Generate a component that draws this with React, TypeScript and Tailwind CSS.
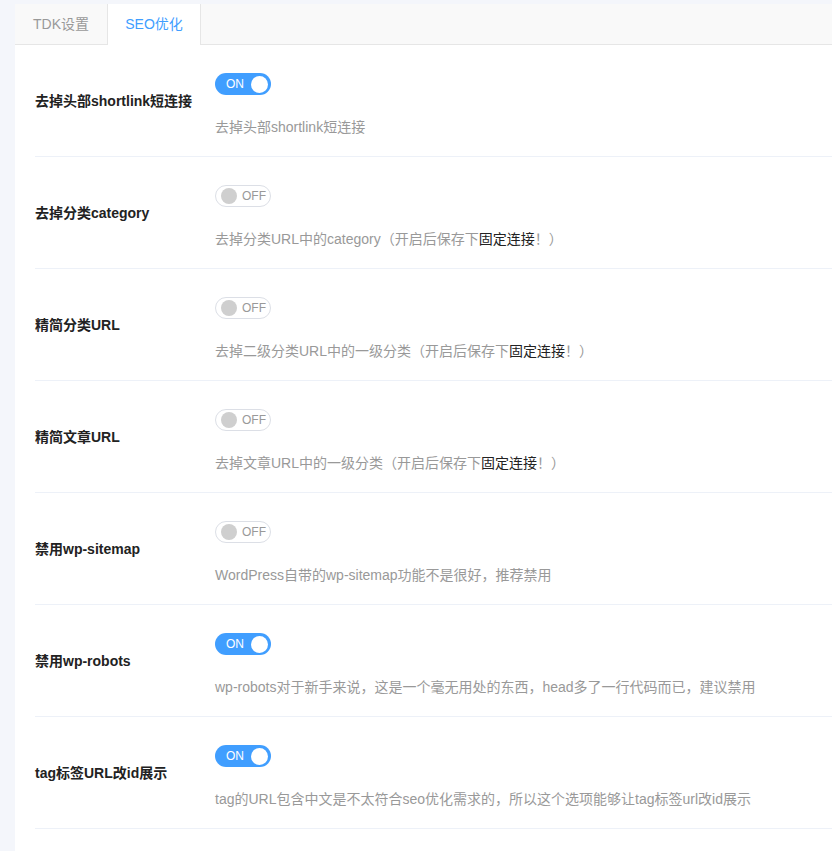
import React from "react";

type Item = { label: string; on: boolean; desc: React.ReactNode };

const link = <span className="text-[#222]">固定连接</span>;

const items: Item[] = [
  { label: "去掉头部shortlink短连接", on: true, desc: <>去掉头部shortlink短连接</> },
  { label: "去掉分类category", on: false, desc: <>去掉分类URL中的category（开启后保存下{link}！）</> },
  { label: "精简分类URL", on: false, desc: <>去掉二级分类URL中的一级分类（开启后保存下{link}！）</> },
  { label: "精简文章URL", on: false, desc: <>去掉文章URL中的一级分类（开启后保存下{link}！）</> },
  { label: "禁用wp-sitemap", on: false, desc: <>WordPress自带的wp-sitemap功能不是很好，推荐禁用</> },
  { label: "禁用wp-robots", on: true, desc: <>wp-robots对于新手来说，这是一个毫无用处的东西，head多了一行代码而已，建议禁用</> },
  { label: "tag标签URL改id展示", on: true, desc: <>tag的URL包含中文是不太符合seo优化需求的，所以这个选项能够让tag标签url改id展示</> },
];

function Toggle({ on }: { on: boolean }) {
  if (on) {
    return (
      <div className="flex h-[22px] w-[56px] items-center justify-between rounded-full bg-[#409eff] pl-[11px] pr-[3px]">
        <span className="text-[12px] leading-none text-white">ON</span>
        <span className="h-[17px] w-[17px] rounded-full bg-white" />
      </div>
    );
  }
  return (
    <div className="flex h-[22px] w-[56px] items-center gap-[5px] rounded-full border border-[#dcdfe6] bg-white pl-[5px]">
      <span className="h-[16px] w-[16px] rounded-full bg-[#cfcfcf]" />
      <span className="text-[12px] leading-none text-[#999]">OFF</span>
    </div>
  );
}

export default function App() {
  return (
    <div
      className="flex min-h-[851px] flex-col bg-[#f4f6fb] pl-[15px] pt-[4px]"
      style={{ fontFamily: '"Liberation Sans", Arial, "Noto Sans CJK SC", sans-serif' }}
    >
      <div className="flex-1 bg-white">
        <div className="flex h-[41px] border-b border-[#e6e6e6] bg-[#f9f9f9]">
          <div className="flex w-[92px] items-center justify-center text-[14px] text-[#999]">TDK设置</div>
          <div className="-mb-px flex w-[94px] items-center justify-center border-x border-[#e6e6e6] bg-white text-[14px] text-[#409eff]">
            SEO优化
          </div>
        </div>
        <div className="pl-[20px]">
          {items.map((it, i) => (
            <div key={i} className="flex border-b border-[#edf1f8]">
              <div className="w-[180px] shrink-0 pt-[46px] text-[14px] font-bold leading-[20px] text-[#222]">
                {it.label}
              </div>
              <div className="flex flex-col pb-[19px] pt-[28px]">
                <Toggle on={it.on} />
                <div className="mt-[22px] whitespace-nowrap text-[14px] leading-[20px] text-[#999]">{it.desc}</div>
              </div>
            </div>
          ))}
        </div>
      </div>
    </div>
  );
}
